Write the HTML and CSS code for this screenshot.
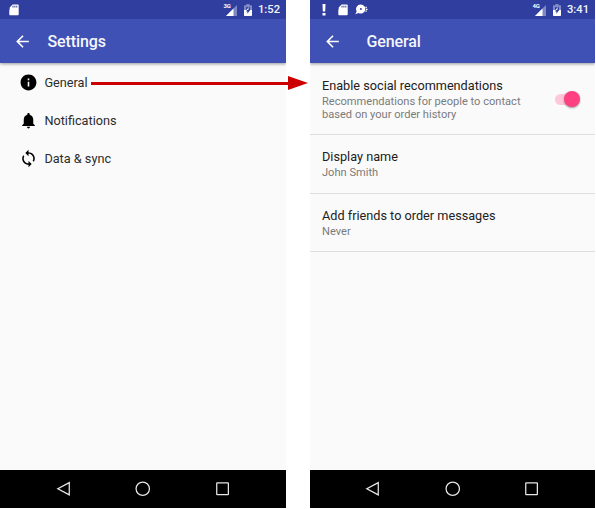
FILE: index.html
```html
<!DOCTYPE html>
<html lang="en">
<head>
<meta charset="utf-8">
<title>Settings</title>
<link rel="stylesheet" href="styles.css">
</head>
<body>
<svg class="defs" width="0" height="0">
  <symbol id="sd" viewBox="0 0 10 12"><path d="M3.6.5H9q.7 0 .7.7v9.2q0 .8-.8.8H1.100q-.8 0-.8-.8V6l.4-.7V3.600z"/><path class="cut" d="M3.500 1.700h1v1.900h-1zM5.400 1.700h1v1.900h-1zM7.300 1.700h1v1.900h-1z"/></symbol>
  <symbol id="signal" viewBox="0 0 11 11"><path d="M11 0v11H0z" opacity=".38"/><path d="M7.500 3.500V11H0z"/></symbol>
  <symbol id="battery" viewBox="0 0 8 12"><path d="M2.500 0h3v1.200H7.300q.7 0 .7.700V6H0V1.900q0-.7.7-.7h1.800z" opacity=".4"/><path class="cut" d="M2 3.200h4V6H2z"/><path d="M0 6h8v5.300q0 .7-.7.700H.7q-.7 0-.7-.7z"/><path d="M4.800 3 2.200 6.500h2z"/><path class="cut" d="M4 6h2.200L3.400 9.800V7.400H2.200L3 6z"/></symbol>
  <symbol id="back" viewBox="0 0 24 24"><path d="M20 11H7.830l5.590-5.590L12 4l-8 8 8 8 1.410-1.410L7.830 13H20v-2z"/></symbol>
  <symbol id="navback" viewBox="0 0 16 16"><path d="M13.700 1.700v12.600L1.900 8z"/></symbol>
  <symbol id="home" viewBox="0 0 16 16"><circle cx="8" cy="8" r="6.900"/></symbol>
  <symbol id="recent" viewBox="0 0 16 16"><rect x="1.800" y="2" width="12" height="12" rx=".4"/></symbol>
</svg>
<main class="stage">
  <section class="phone">
    <header class="status">
      <svg class="sd"><use href="#sd"/></svg>
      <span class="net">3G</span>
      <svg class="signal"><use href="#signal"/></svg>
      <svg class="battery"><use href="#battery"/></svg>
      <span class="time">1:52</span>
    </header>
    <div class="appbar"><svg class="back"><use href="#back"/></svg><h1>Settings</h1></div>
    <ul class="menu">
      <li><svg viewBox="0 0 24 24"><path d="M12 2C6.480 2 2 6.480 2 12s4.480 10 10 10 10-4.480 10-10S17.520 2 12 2zm1 15h-2v-6h2v6zm0-8h-2V7h2v2z"/></svg>General</li>
      <li><svg viewBox="0 0 24 24"><path d="M12 22c1.100 0 2-.9 2-2h-4c0 1.100.89 2 2 2zm6-6v-5c0-3.070-1.640-5.640-4.500-6.320V4c0-.83-.67-1.500-1.500-1.500s-1.500.67-1.500 1.500v.68C7.630 5.360 6 7.920 6 11v5l-2 2v1h16v-1l-2-2z"/></svg>Notifications</li>
      <li><svg viewBox="0 0 24 24"><path d="M12 4V1L8 5l4 4V6c3.310 0 6 2.690 6 6 0 1.010-.25 1.970-.7 2.800l1.460 1.460C19.540 15.030 20 13.570 20 12c0-4.420-3.580-8-8-8zm0 14c-3.310 0-6-2.690-6-6 0-1.010.25-1.970.7-2.800L5.240 7.740C4.460 8.970 4 10.430 4 12c0 4.420 3.580 8 8 8v3l4-4-4-4v3z"/></svg>Data &amp; sync</li>
    </ul>
    <nav class="navbar"><svg><use href="#navback"/></svg><svg><use href="#home"/></svg><svg><use href="#recent"/></svg></nav>
  </section>
  <section class="phone detail">
    <header class="status">
      <svg class="alert" viewBox="0 0 4 12"><path d="M.5 0h3L3.200 7.500H.8zM.5 9h3v2.500h-3z"/></svg>
      <svg class="sd"><use href="#sd"/></svg>
      <svg class="bug" viewBox="0 0 13 11"><path d="M5.800.5a4.500 4.500 0 1 1-2.200 8.400L.3 10.300l1.400-3A4.500 4.500 0 0 1 5.800.5z"/><circle class="cut" cx="5.900" cy="5" r="1"/><path d="M10.500 2.700h1.300v1.400h-1.300zM11 4.700h1.500v1.200H11zM10.500 6.500h1.300v1.300h-1.300z"/></svg>
      <span class="net">4G</span>
      <svg class="signal"><use href="#signal"/></svg>
      <svg class="battery"><use href="#battery"/></svg>
      <span class="time">3:41</span>
    </header>
    <div class="appbar"><svg class="back"><use href="#back"/></svg><h1>General</h1></div>
    <div class="prefs">
      <div class="pref tall">
        <div><h2>Enable social recommendations</h2><p>Recommendations for people to contact<br>based on your order history</p></div>
        <span class="switch"></span>
      </div>
      <div class="pref"><div><h2>Display name</h2><p>John Smith</p></div></div>
      <div class="pref"><div><h2>Add friends to order messages</h2><p>Never</p></div></div>
    </div>
    <nav class="navbar"><svg><use href="#navback"/></svg><svg><use href="#home"/></svg><svg><use href="#recent"/></svg></nav>
  </section>
  <svg class="arrow" viewBox="0 0 217 14"><path d="M0 6h197V0l20 7-20 7V9H0z"/></svg>
</main>
</body>
</html>
```
FILE: styles.css
```css
* { box-sizing: border-box; margin: 0; padding: 0; }
body { background: #fff; font-family: Roboto, sans-serif; overflow: hidden; }
svg { display: block; flex: none; }
.defs { position: absolute; }
.cut { fill: #303f9f; }

.stage { position: relative; display: flex; gap: 24px; width: 595px; height: 508px; }
.phone { display: flex; flex-direction: column; width: 286px; height: 508px; background: #fafafa; }
.detail { width: 285px; }

.status { display: flex; align-items: center; height: 19px; padding: 0 6px 0 9px; background: #303f9f; color: #fff; fill: #fff; }
.sd { width: 10px; height: 12px; }
.net { margin: -7px -5px 0 auto; font-size: 6px; line-height: 8px; font-weight: 700; }
.signal { width: 11px; height: 11px; margin-top: 1px; }
.battery { width: 8px; height: 12px; margin: 1px 6px 0 7px; }
.time { font-size: 11.2px; line-height: 14px; font-weight: 500; margin-top: 1px; opacity: .95; }
.detail .status { padding-left: 12px; }
.alert { width: 4px; height: 12px; margin-right: 12px; }
.bug { width: 13px; height: 11px; margin-left: 7px; }

.appbar { display: flex; align-items: center; height: 44px; flex: none; padding-left: 13px; background: #3f51b5; color: #fff; fill: #fff; box-shadow: 0 1px 3px rgba(0,0,0,.4); clip-path: inset(0 0 -8px 0); }
.back { width: 19px; height: 19px; margin-top: 1px; }
.appbar h1 { margin: 2px 0 0 15.500px; font-size: 16px; letter-spacing: -.1px; line-height: 20px; font-weight: 500; opacity: .95; }
.detail .appbar { padding-left: 12.500px; }
.detail .appbar h1 { margin-left: 25px; }

.menu { flex: 1; list-style: none; }
.menu li { display: flex; align-items: center; gap: 6.400px; height: 38px; padding-left: 19px; font-size: 12.7px; color: #2c2c2c; }
.menu svg { width: 19px; height: 19px; margin-top: 1px; }

.prefs { flex: 1; }
.pref { display: flex; justify-content: space-between; height: 58.500px; padding: 13.300px 15px 0 12px; border-bottom: 1px solid #dedede; }
.pref.tall { height: 72px; padding-top: 14px; }
.pref h2 { font-size: 12.7px; line-height: 17px; font-weight: 400; color: #212121; }
.pref p { font-size: 11.1px; line-height: 13px; color: #7b7b7b; margin-top: 1px; }
.switch { position: relative; width: 25px; height: 11px; margin-top: 17px; border-radius: 6px; background: #ffc8d9; }
.switch::after { content: ""; position: absolute; right: 0; top: -3px; width: 16px; height: 16px; border-radius: 50%; background: #ff4081; box-shadow: 0 1px 2px rgba(0,0,0,.4); }

.navbar { display: flex; align-items: center; justify-content: center; gap: 64px; height: 38px; background: #000; }
.navbar svg { width: 15.500px; height: 15.500px; fill: none; stroke: #e6e6e6; stroke-width: 1.300; }

.arrow { position: absolute; left: 91px; top: 76px; width: 217px; height: 14px; fill: #c00; }
```
